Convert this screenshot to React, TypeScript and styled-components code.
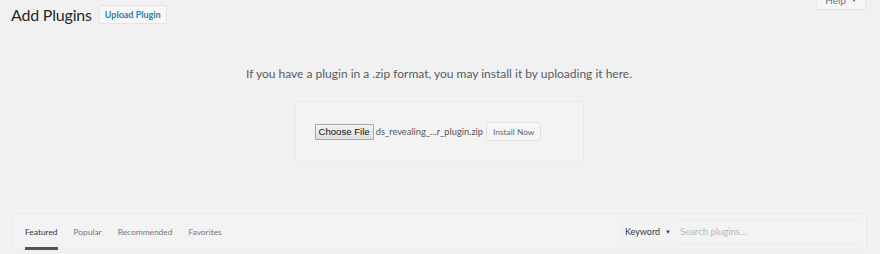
import React from "react";
import styled, { createGlobalStyle } from "styled-components";

const Global = createGlobalStyle`
  html, body { margin: 0; padding: 0; background: #f1f1f1; }
  body { font-family: Lato, "Open Sans", sans-serif; color: #444; overflow: hidden; }
  * { box-sizing: border-box; }
`;

const Page = styled.div`
  position: relative;
  width: 880px;
  height: 254px;
  padding: 0 13px 0 11px;
`;

const HelpTab = styled.div`
  position: absolute;
  top: -10px;
  right: 15px;
  width: 48px;
  height: 19px;
  background: #f6f6f6;
  box-shadow: 0 1px 2px rgba(0, 0, 0, 0.1);
  font-size: 10px;
  color: #72777c;
  display: flex;
  align-items: center;
  justify-content: center;
  gap: 5px;
`;

const Header = styled.div`
  display: flex;
  align-items: center;
  gap: 7px;
  height: 29px;
`;

const Title = styled.h1`
  margin: 0;
  font-size: 16px;
  font-weight: 400;
  color: #23282d;
  letter-spacing: -0.2px;
  line-height: 29px;
`;

const PageButton = styled.button`
  font-family: inherit;
  height: 19px;
  padding: 0 5px;
  font-size: 9px;
  font-weight: 700;
  color: #2a7fb0;
  background: #f7f7f7;
  border: 1px solid #e4e4e4;
  border-radius: 2px;
`;

const Intro = styled.p`
  margin: 36px 0 0;
  text-align: center;
  font-size: 12px;
  color: #555d66;
  line-height: 18px;
`;

const UploadBox = styled.div`
  margin: 18px auto 0;
  width: 289px;
  height: 61px;
  background: #f3f3f3;
  border: 1px solid #ebebeb;
  display: flex;
  align-items: center;
  padding-left: 19px;
`;

const FileButton = styled.span`
  display: inline-flex;
  align-items: center;
  height: 16px;
  padding: 0 3px;
  font-family: "Liberation Sans", Arial, sans-serif;
  font-size: 9.6px;
  color: #111;
  background: linear-gradient(#f4f4f4, #dedede);
  border: 1px solid #a8a8a8;
  border-radius: 1px;
`;

const FileName = styled.span`
  font-size: 9.3px;
  color: #555;
  margin-left: 2px;
  white-space: nowrap;
`;

const InstallButton = styled.button`
  font-family: inherit;
  height: 19px;
  margin-left: 3px;
  padding: 0 6px;
  font-size: 8.4px;
  color: #666;
  background: #f7f7f7;
  border: 1px solid #e2e2e2;
  border-radius: 2px;
`;

const FilterBar = styled.div`
  margin-top: 51px;
  margin-left: 1px;
  height: 37px;
  background: #f3f3f3;
  border: 1px solid #ebebeb;
  display: flex;
  align-items: stretch;
  justify-content: space-between;
  padding: 0 8px 0 12px;
`;

const Tabs = styled.div`
  display: flex;
  gap: 16px;
`;

const Tab = styled.div<{ $active?: boolean }>`
  display: flex;
  align-items: center;
  font-size: 8.4px;
  color: ${(p) => (p.$active ? "#32373c" : "#72777c")};
  border-bottom: 3px solid ${(p) => (p.$active ? "#555" : "transparent")};
  padding-top: 3px;
  margin-bottom: -1px;
`;

const Search = styled.div`
  display: flex;
  align-items: center;
  gap: 2px;
  padding: 7px 0;
`;

const Select = styled.div`
  height: 24px;
  width: 51px;
  display: flex;
  align-items: center;
  justify-content: center;
  gap: 5px;
  font-size: 9px;
  color: #32373c;
  border: 1px solid #ededed;
  border-right: none;
`;

const Caret = styled.span`
  font-size: 6px;
  color: #444;
`;

const SearchInput = styled.div`
  height: 24px;
  width: 183px;
  display: flex;
  align-items: center;
  padding-left: 5px;
  font-size: 9.5px;
  color: #b4b9be;
  border-top: 1px solid #ebebeb;
  border-bottom: 1px solid #ebebeb;
`;

export default function App() {
  return (
    <Page>
      <Global />
      <HelpTab>
        Help <Caret>▼</Caret>
      </HelpTab>
      <Header>
        <Title>Add Plugins</Title>
        <PageButton>Upload Plugin</PageButton>
      </Header>
      <Intro>If you have a plugin in a .zip format, you may install it by uploading it here.</Intro>
      <UploadBox>
        <FileButton>Choose File</FileButton>
        <FileName>ds_revealing_...r_plugin.zip</FileName>
        <InstallButton>Install Now</InstallButton>
      </UploadBox>
      <FilterBar>
        <Tabs>
          <Tab $active>Featured</Tab>
          <Tab>Popular</Tab>
          <Tab>Recommended</Tab>
          <Tab>Favorites</Tab>
        </Tabs>
        <Search>
          <Select>
            Keyword <Caret>▼</Caret>
          </Select>
          <SearchInput>Search plugins...</SearchInput>
        </Search>
      </FilterBar>
    </Page>
  );
}
